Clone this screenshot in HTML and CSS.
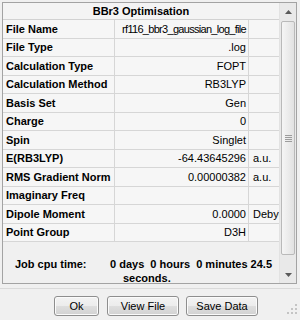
FILE: index.html
```html
<!doctype html>
<html lang="en">
  <head>
    <meta charset="UTF-8" />
    <meta name="viewport" content="width=device-width, initial-scale=1.0" />
    <title>BBr3 Optimisation</title>
    <link rel="stylesheet" href="styles.css">
  </head>

  <body>
    <div class="panel">
      <div class="content">
        <div class="title">BBr3 Optimisation</div>
        <div class="grid">
          <div class="key">File Name</div><div class="val val-long">rf116_bbr3_gaussian_log_file</div><div class="unit"></div>
          <div class="key">File Type</div><div class="val">.log</div><div class="unit"></div>
          <div class="key">Calculation Type</div><div class="val">FOPT</div><div class="unit"></div>
          <div class="key">Calculation Method</div><div class="val">RB3LYP</div><div class="unit"></div>
          <div class="key">Basis Set</div><div class="val">Gen</div><div class="unit"></div>
          <div class="key">Charge</div><div class="val">0</div><div class="unit"></div>
          <div class="key">Spin</div><div class="val">Singlet</div><div class="unit"></div>
          <div class="key">E(RB3LYP)</div><div class="val">-64.43645296</div><div class="unit">a.u.</div>
          <div class="key">RMS Gradient Norm</div><div class="val">0.00000382</div><div class="unit">a.u.</div>
          <div class="key">Imaginary Freq</div><div class="val"></div><div class="unit"></div>
          <div class="key">Dipole Moment</div><div class="val">0.0000</div><div class="unit">Debye</div>
          <div class="key">Point Group</div><div class="val">D3H</div><div class="unit"></div>
        </div>
        <div class="cpu">
          <div class="cpu-label">Job cpu time:</div>
          <div class="cpu-value">0 days&nbsp; 0 hours&nbsp; 0 minutes 24.5 seconds.</div>
        </div>
      </div>
      <div class="scrollbar">
        <div class="arrow">
          <svg width="7" height="4" viewBox="0 0 7 4"><path d="M0 4 L3.5 0 L7 4 Z" fill="#5a5a5a"/></svg>
        </div>
        <div class="track">
          <div class="thumb">
            <div class="grip-lines"><span></span><span></span><span></span><span></span></div>
          </div>
        </div>
        <div class="arrow">
          <svg width="7" height="4" viewBox="0 0 7 4"><path d="M0 0 L7 0 L3.5 4 Z" fill="#5a5a5a"/></svg>
        </div>
      </div>
    </div>

    <div class="buttons">
      <button class="btn btn-ok">Ok</button>
      <button class="btn">View File</button>
      <button class="btn">Save Data</button>
      <svg class="resize" width="10" height="10" viewBox="0 0 10 10">
        <rect x="8" y="0" width="2" height="2" fill="#c4c4c4"/>
        <rect x="4" y="4" width="2" height="2" fill="#c4c4c4"/>
        <rect x="8" y="4" width="2" height="2" fill="#c4c4c4"/>
        <rect x="0" y="8" width="2" height="2" fill="#c4c4c4"/>
        <rect x="4" y="8" width="2" height="2" fill="#c4c4c4"/>
        <rect x="8" y="8" width="2" height="2" fill="#c4c4c4"/>
      </svg>
    </div>
  </body>
</html>
```

FILE: styles.css
```css
  body {
    margin: 0;
    font-family: "Liberation Sans", Arial, sans-serif;
    font-size: 11px;
    color: #000;
    background-color: #f0f0f0;
  }

  .panel {
    display: flex;
    margin: 2px 3px 0 2px;
    height: 280px;
    border: 1px solid #a3a3a3;
    background-color: #f0f0f0;
  }

  .content {
    display: flex;
    flex-direction: column;
    width: 276px;
  }

  .title {
    box-sizing: border-box;
    height: 17px;
    line-height: 16px;
    text-align: center;
    font-weight: bold;
    border-bottom: 1px solid #d2d2d2;
    background-color: #f4f4f4;
  }

  .grid {
    display: grid;
    grid-template-columns: 112px 134px 30px;
    grid-auto-rows: 18.5px;
  }

  .key,
  .val,
  .unit {
    box-sizing: border-box;
    display: flex;
    align-items: center;
    white-space: nowrap;
    overflow: hidden;
    border-bottom: 1px solid #d6d6d6;
    background-color: #f6f6f6;
  }

  .key {
    padding-left: 3px;
    font-weight: bold;
    border-right: 1px solid #d6d6d6;
  }

  .val {
    justify-content: flex-end;
    padding-right: 2px;
    border-right: 1px solid #d6d6d6;
  }

  .val-long {
    letter-spacing: -0.7px;
  }

  .unit {
    padding-left: 4px;
  }

  .cpu {
    display: flex;
    flex: 1;
    padding-top: 15px;
    line-height: 14px;
    font-weight: bold;
  }

  .cpu-label {
    box-sizing: border-box;
    width: 107px;
    padding-left: 12px;
    flex-shrink: 0;
  }

  .cpu-value {
    flex: 1;
    padding-left: 13px;
    text-indent: -13px;
  }

  .scrollbar {
    display: flex;
    flex-direction: column;
    width: 17px;
    background-color: #e9e9e9;
    border-left: 1px solid #e2e2e2;
  }

  .arrow {
    display: flex;
    align-items: center;
    justify-content: center;
    height: 17px;
  }

  .track {
    flex: 1;
    display: flex;
    flex-direction: column;
    padding: 1px 1px 11px 1px;
  }

  .thumb {
    flex: 1;
    display: flex;
    align-items: center;
    justify-content: center;
    border: 1px solid #b9b9b9;
    border-radius: 2px;
    background: linear-gradient(to right, #f5f5f5, #e2e2e2);
  }

  .grip-lines {
    display: flex;
    flex-direction: column;
    gap: 1px;
  }

  .grip-lines span {
    display: block;
    width: 7px;
    height: 1px;
    background-color: #9c9c9c;
  }

  .buttons {
    display: flex;
    align-items: flex-start;
    gap: 7px;
    margin-top: 4px;
    padding: 7px 3px 0 54px;
    border-top: 1px solid #dadada;
    height: 24px;
  }

  .btn {
    height: 20px;
    width: 72px;
    padding: 0;
    font-family: "Liberation Sans", Arial, sans-serif;
    font-size: 11px;
    color: #000;
    border: 1px solid #8e8e8e;
    border-radius: 3px;
    background: linear-gradient(#f3f3f3 0%, #ececec 50%, #dedede 51%, #d2d2d2 100%);
    box-shadow: inset 0 0 0 1px #fbfbfb;
  }

  .btn-ok {
    width: 45px;
    margin-right: 1px;
  }

  .resize {
    margin-left: auto;
    margin-top: 8px;
  }
```
